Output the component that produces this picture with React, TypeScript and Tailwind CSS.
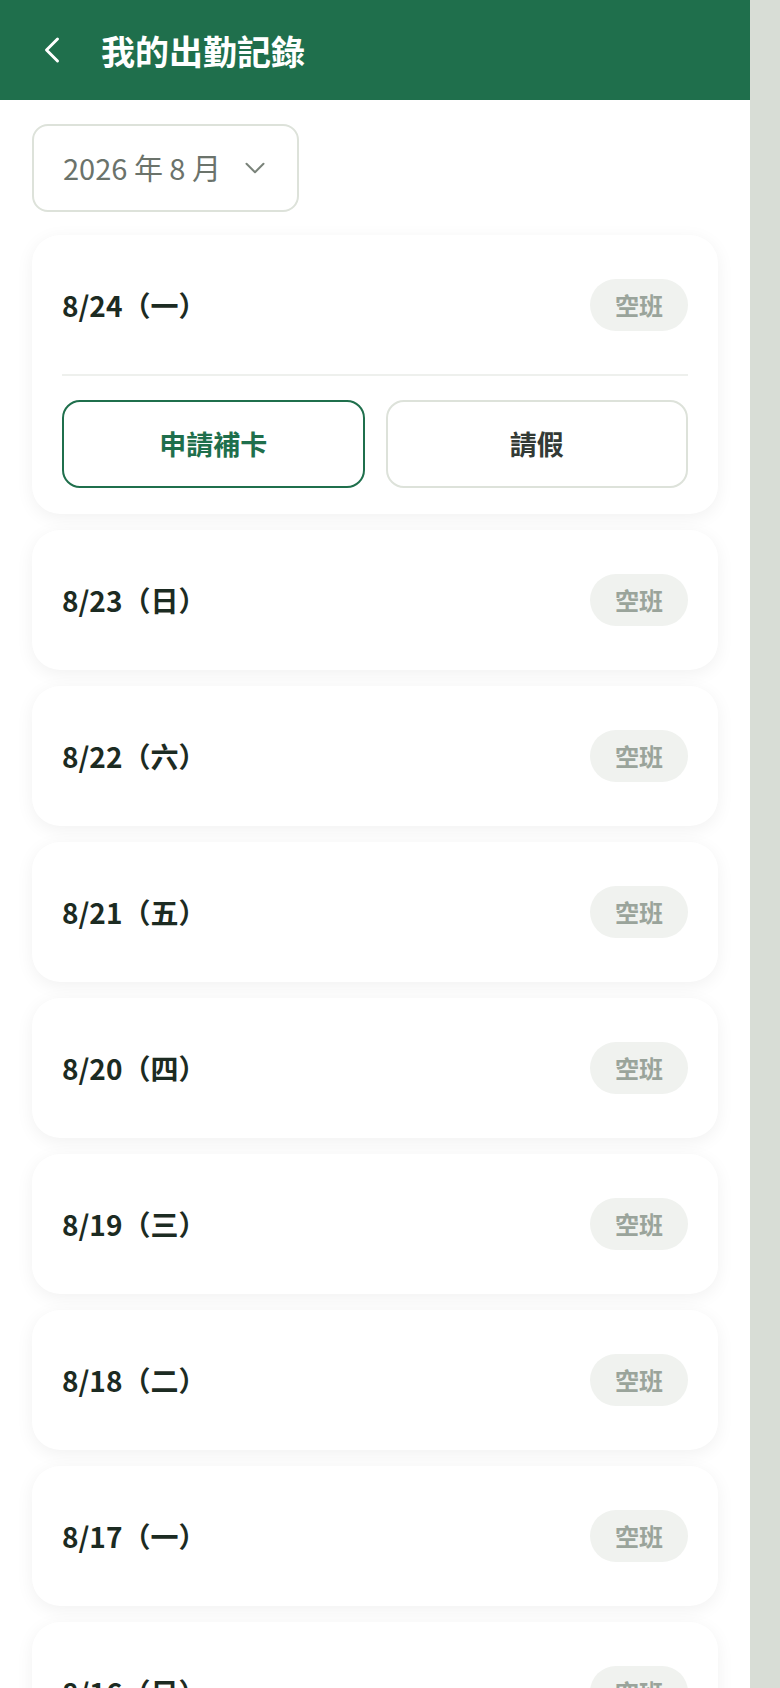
import { ChevronLeft, ChevronDown } from "lucide-react";

type Day = { date: string; status: string; expanded?: boolean };

const days: Day[] = [
  { date: "8/24（一）", status: "空班", expanded: true },
  { date: "8/23（日）", status: "空班" },
  { date: "8/22（六）", status: "空班" },
  { date: "8/21（五）", status: "空班" },
  { date: "8/20（四）", status: "空班" },
  { date: "8/19（三）", status: "空班" },
  { date: "8/18（二）", status: "空班" },
  { date: "8/17（一）", status: "空班" },
  { date: "8/16（日）", status: "空班" },
];

function DayCard({ day }: { day: Day }) {
  return (
    <div className="rounded-[28px] bg-white px-[30px] pt-[30px] pb-[30px] shadow-[0_4px_18px_rgba(0,0,0,0.06)]">
      {/* Header row */}
      <div className="flex h-[80px] items-center justify-between">
        <span className="text-[28px] font-bold text-[#1c2b22]">{day.date}</span>
        <span className="flex h-[52px] items-center rounded-full bg-[#f0f2ef] px-[25px] text-[24px] font-bold text-[#9aa49b]">
          {day.status}
        </span>
      </div>

      {day.expanded && (
        <>
          <div className="mt-[29px] h-[2px] bg-[#eef0ed]" />
          <div className="mt-[24px] -mb-[4px] grid grid-cols-2 gap-[21px]">
            <button className="h-[88px] rounded-[18px] border-2 border-[#1f6f4c] text-[27px] font-bold text-[#1f6f4c]">
              申請補卡
            </button>
            <button className="h-[88px] rounded-[18px] border-2 border-[#dde2da] text-[27px] font-bold text-[#333a35]">
              請假
            </button>
          </div>
        </>
      )}
    </div>
  );
}

export default function App() {
  return (
    <div
      className="min-h-screen bg-[#d8ddd6]"
      style={{ fontFamily: '"Noto Sans CJK TC", "Noto Sans", sans-serif' }}
    >
      <div className="min-h-screen w-[750px] bg-white">
        {/* Header */}
        <header className="flex h-[100px] items-center bg-[#1f6f4c] pl-[30px]">
          <ChevronLeft className="size-[44px] text-white" strokeWidth={1.6} />
          <h1 className="ml-[27px] text-[34px] font-bold text-white">我的出勤記錄</h1>
        </header>

        {/* Month picker */}
        <div className="px-[32px] pt-[24px]">
          <button className="flex h-[88px] w-[267px] items-center rounded-[16px] border-2 border-[#dde2da] pl-[29px] text-[29px] text-[#6b736b]">
            2026 年 8 月
            <ChevronDown className="ml-[17px] size-[34px] text-[#7a837a]" strokeWidth={1.4} />
          </button>
        </div>

        {/* Day list */}
        <div className="flex flex-col gap-[16px] px-[32px] pt-[23px] pb-[40px]">
          {days.map((d) => (
            <DayCard key={d.date} day={d} />
          ))}
        </div>
      </div>
    </div>
  );
}
